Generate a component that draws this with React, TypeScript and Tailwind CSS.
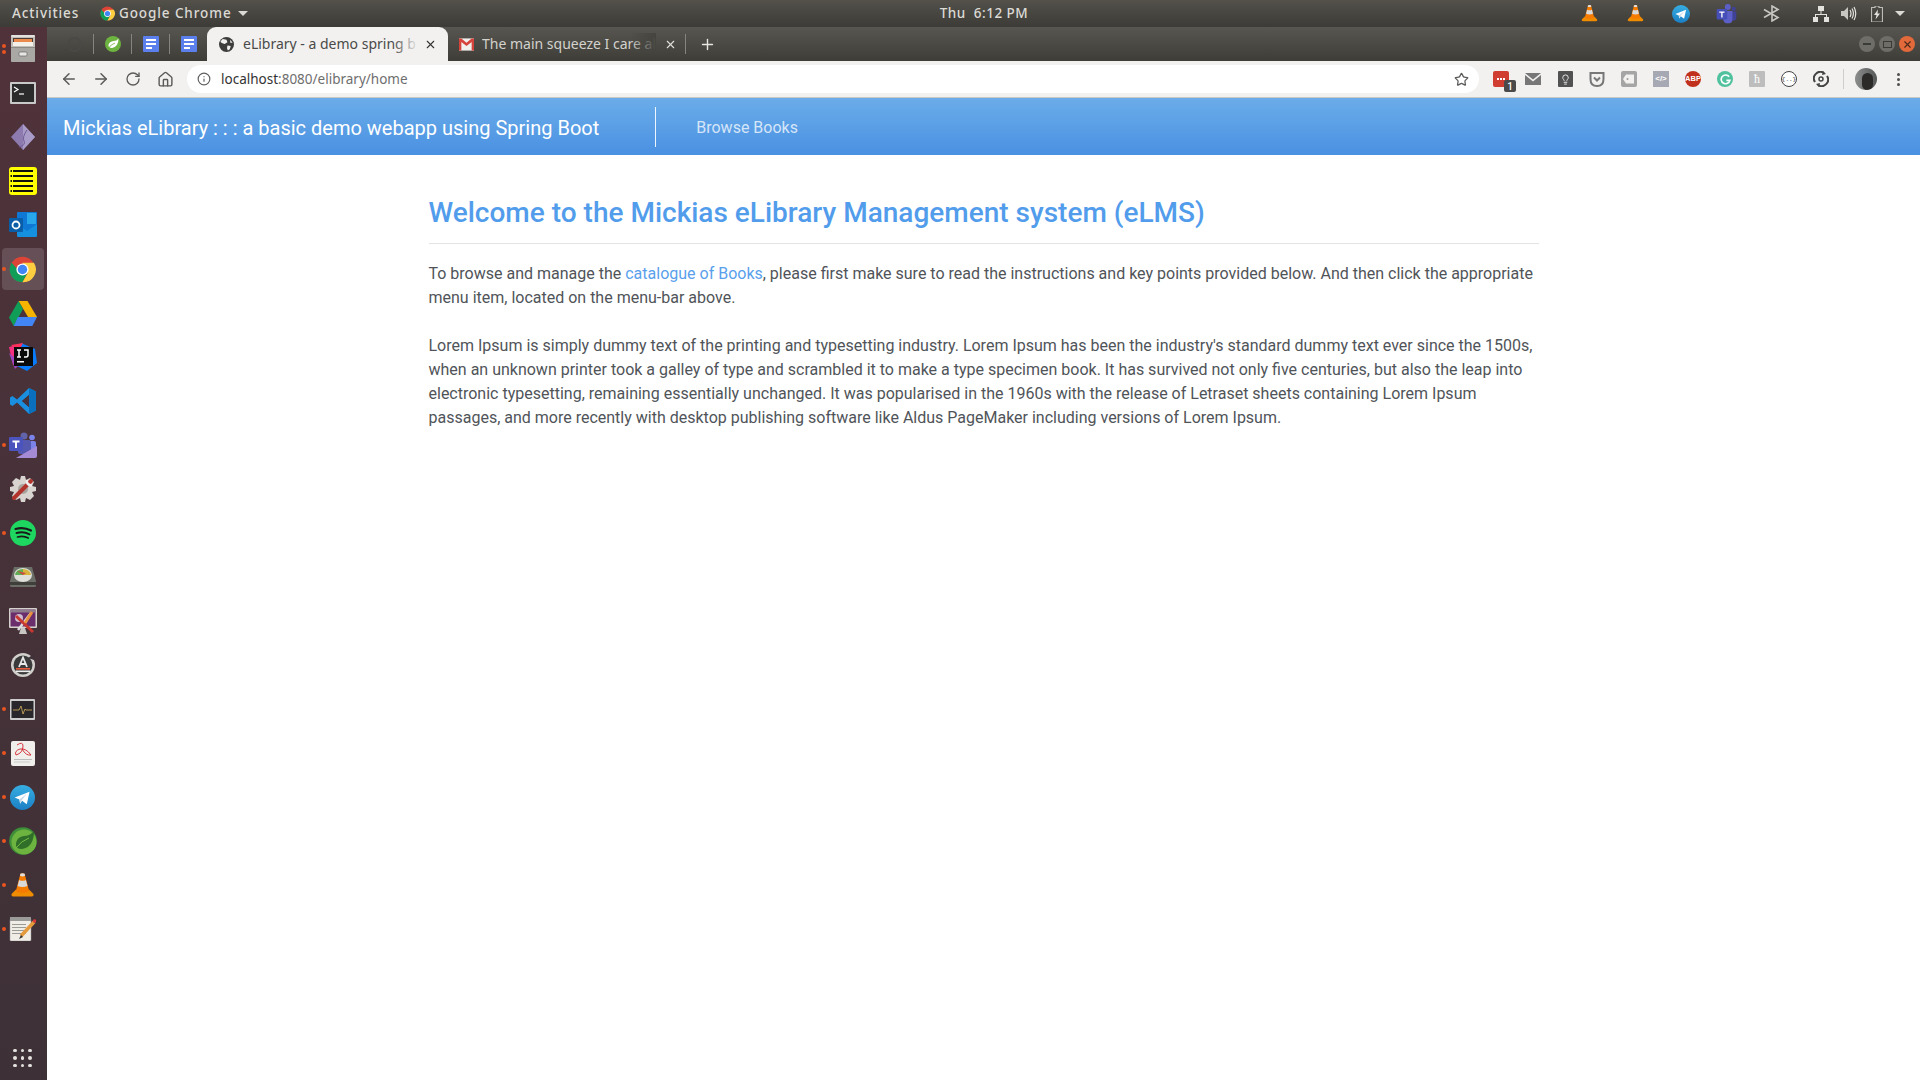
import React from "react";
import { ArrowLeft, ArrowRight, RotateCw, Home, Star, Info, X, Plus, Lightbulb } from "lucide-react";

type IP = { s?: number };
const Chrome = ({ s = 28 }: IP) => (
  <svg width={s} height={s} viewBox="0 0 32 32">
    <circle cx="16" cy="16" r="15" fill="#db4437" />
    <path d="M3.2 8 A15 15 0 0 0 16 31 L23 18 L12 18Z" fill="#0f9d58" />
    <path d="M16 8 H29.500 A15 15 0 0 1 16 31 L22.500 19.700Z" fill="#ffcd40" />
    <circle cx="16" cy="16" r="7.200" fill="#fff" />
    <circle cx="16" cy="16" r="5.600" fill="#4285f4" />
  </svg>
);
const Vlc = ({ s = 28 }: IP) => (
  <svg width={s} height={s} viewBox="0 0 32 32">
    <path d="M3 26 L8 21 H24 L29 26 Q29.500 29 27 29 H5 Q2.500 29 3 26Z" fill="#f08c00" />
    <path d="M13.500 2 Q16 1 18.500 2 L24 23 Q16 27 8 23Z" fill="#f57c00" />
    <path d="M12 9.500 Q16 11.500 20 9.500 L21.800 16.500 Q16 19 10.200 16.500Z" fill="#d9d9d9" />
    <path d="M13.500 2 Q16 1 18.500 2 L19 4.500 Q16 6 13 4.500Z" fill="#e0e0e0" />
  </svg>
);
const Telegram = ({ s = 28 }: IP) => (
  <svg width={s} height={s} viewBox="0 0 32 32">
    <defs><linearGradient id="tg" x1="0" y1="0" x2="0" y2="1"><stop offset="0" stopColor="#37aee2" /><stop offset="1" stopColor="#1b7fc4" /></linearGradient></defs>
    <circle cx="16" cy="16" r="16" fill="url(#tg)" />
    <path d="M6 16 L25 8.500 L21.500 24.500 L15.500 20 L13 24 L12 18.500Z" fill="#fff" />
    <path d="M12 18.500 L22 11 L15 19.500 L13 24Z" fill="#c8daea" />
  </svg>
);
const Teams = ({ s = 28 }: IP) => (
  <svg width={s} height={s} viewBox="0 0 32 32">
    <circle cx="18" cy="6" r="4.500" fill="#5b5fc7" />
    <circle cx="27" cy="9" r="3.200" fill="#3f4296" />
    <path d="M21 13 H31 V22 Q31 27 26 27 Q22 27 21 24Z" fill="#3f4296" />
    <path d="M11 12 H25 V25 Q25 31 18 31 Q12 31 11 25Z" fill="#5b5fc7" />
    <rect x="1" y="9" width="16" height="16" rx="1.500" fill="#464eb8" />
    <path d="M5 13 H13 V15 H10 V22 H8 V15 H5Z" fill="#fff" />
  </svg>
);

const Cabinet = () => (
  <svg width="26" height="28" viewBox="0 0 26 28">
    <rect x="1" y="0" width="24" height="27" rx="2" fill="#c2bfba" />
    <rect x="1" y="0" width="24" height="2" rx="1" fill="#e4e2de" />
    <rect x="3" y="3" width="20" height="8" fill="#4c3a33" />
    <rect x="4" y="4" width="18" height="3" fill="#ea8a4c" />
    <rect x="3" y="7" width="20" height="4" fill="#f3efe9" />
    <rect x="1" y="12" width="24" height="1" fill="#8d8a86" />
    <rect x="1" y="13" width="24" height="14" rx="1" fill="#aaa8a5" />
    <rect x="9" y="17" width="8" height="4" rx="1" fill="#e8e6e3" stroke="#666" strokeWidth="0.700" />
  </svg>
);
const Terminal = () => (
  <svg width="26" height="22" viewBox="0 0 26 22">
    <rect width="26" height="22" rx="1" fill="#c9c9c9" />
    <rect x="2" y="2" width="22" height="18" fill="#2b2b2b" />
    <path d="M4 5 L8 7.500 L4 10" fill="none" stroke="#fff" strokeWidth="1.200" />
    <path d="M9 12 H14" stroke="#fff" strokeWidth="1.200" />
  </svg>
);
const Diamond = () => (
  <svg width="26" height="28" viewBox="0 0 26 28">
    <path d="M13 1 L25 14 L13 27 L1 14Z" fill="#8d7bb0" />
    <path d="M13 1 L25 14 L13 27Z" fill="#a99bc8" />
    <path d="M17 7 Q12 14 14 18 T9 24" stroke="#6f5b93" strokeWidth="1" fill="none" />
  </svg>
);
const Notes = () => (
  <svg width="28" height="28" viewBox="0 0 28 28">
    <rect width="28" height="28" rx="3" fill="#ffff00" />
    {[3, 8, 13, 18, 23].map((y) => <rect key={y} x="4" y={y} width="20" height="2" fill="#111" />)}
    {[3, 8, 13, 18, 23].map((y) => <rect key={y} x="1.500" y={y} width="1.500" height="2" fill="#111" />)}
  </svg>
);
const Outlook = () => (
  <svg width="28" height="26" viewBox="0 0 28 26">
    <rect x="8" y="0" width="20" height="24" rx="1" fill="#0f78d4" />
    <rect x="18" y="1" width="9" height="11" fill="#28a8ea" />
    <path d="M8 12 L18 19 L28 12 V24 Q28 25 27 25 H9 Q8 25 8 24Z" fill="#1490df" />
    <rect x="0" y="6" width="14" height="14" rx="1" fill="#0a5ea8" />
    <circle cx="7" cy="13" r="3.500" fill="none" stroke="#fff" strokeWidth="1.800" />
  </svg>
);
const Drive = () => (
  <svg width="28" height="25" viewBox="0 0 28 25">
    <path d="M9.500 0 H18.500 L28 16 H19Z" fill="#f4b400" />
    <path d="M9.500 0 L0 16.500 L4.700 25 L14 8Z" fill="#0f9d58" />
    <path d="M9 16 H28 L23.300 25 H4.700Z" fill="#4285f4" />
  </svg>
);
const Intellij = () => (
  <svg width="28" height="28" viewBox="0 0 28 28">
    <path d="M0 4 L12 1 L10 22 L4 22Z" fill="#f5317f" />
    <path d="M12 0 L26 6 L28 20 L18 28 L6 22Z" fill="#087cfa" />
    <path d="M0 10 L6 26 L12 20Z" fill="#9d44c0" />
    <path d="M2 2 L14 0 L10 8Z" fill="#fe315d" />
    <rect x="5" y="4" width="19" height="19" fill="#0a0a0a" />
    <path d="M8 7 H12 M10 7 V14 M8 14 H12 M15 7 H19 V12 Q19 14 17 14 H15" stroke="#fff" strokeWidth="1.500" fill="none" />
    <rect x="8" y="18" width="7" height="1.500" fill="#fff" />
  </svg>
);
const VsCode = () => (
  <svg width="26" height="26" viewBox="0 0 26 26">
    <path d="M19 0 L26 3.500 V22.500 L19 26 L7 14.500 L2.500 18 L0 16.500 V9.500 L2.500 8 L7 11.500Z M19 7 L12 13 L19 19Z" fillRule="evenodd" fill="#1a8fdf" />
    <path d="M19 0 L26 3.500 V22.500 L19 26Z" fill="#0a6fbd" />
    <path d="M19 7 L19 19 L12 13Z" fill="#45323a" />
  </svg>
);
const TeamsDock = () => (
  <svg width="28" height="26" viewBox="0 0 28 26">
    <circle cx="15" cy="4" r="3.500" fill="#6264a7" />
    <circle cx="23" cy="5.500" r="2.800" fill="#7b83eb" />
    <rect x="18" y="9" width="9" height="11" rx="2" fill="#7b83eb" />
    <rect x="9" y="8" width="13" height="14" rx="2" fill="#5558af" />
    <rect x="0" y="5" width="14" height="14" rx="1" fill="#4b53bc" />
    <path d="M3.500 8.500 H10.500 V10.500 H8 V16 H6 V10.500 H3.500Z" fill="#fff" />
    <path d="M7 26 L28 14 V24 Q28 26 26 26Z" fill="#a58ad6" />
  </svg>
);
const Gear = () => (
  <svg width="26" height="26" viewBox="0 0 26 26">
    <path d="M11 0 H15 L16 4 L20 2 L24 6 L22 10 L26 11 V15 L22 16 L24 20 L20 24 L16 22 L15 26 H11 L10 22 L6 24 L2 20 L4 16 L0 15 V11 L4 10 L2 6 L6 2 L10 4Z" fill="#d8d4cf" />
    <circle cx="13" cy="13" r="5" fill="#a8a39d" />
    <path d="M21 5 L4 22" stroke="#b3342d" strokeWidth="4" strokeLinecap="round" />
    <path d="M17 4 a4 4 0 0 0 5 5" fill="none" stroke="#eee" strokeWidth="2.500" />
  </svg>
);
const Spotify = () => (
  <svg width="26" height="26" viewBox="0 0 26 26">
    <circle cx="13" cy="13" r="13" fill="#1ed760" />
    <path d="M5.500 9 Q13.500 6.500 21 10.500" stroke="#1a1a1a" strokeWidth="2.200" fill="none" strokeLinecap="round" />
    <path d="M6.500 13 Q13.500 11 19.500 14.300" stroke="#1a1a1a" strokeWidth="1.900" fill="none" strokeLinecap="round" />
    <path d="M7.500 17 Q13.500 15.300 18.300 18" stroke="#1a1a1a" strokeWidth="1.600" fill="none" strokeLinecap="round" />
  </svg>
);
const Disk = () => (
  <svg width="26" height="20" viewBox="0 0 26 20">
    <path d="M4 0 H22 L26 14 V19 Q26 20 24 20 H2 Q0 20 0 19 V14Z" fill="#6c6e68" />
    <ellipse cx="13" cy="8" rx="9" ry="7" fill="#dfe0da" />
    <path d="M5 8 A8 6 0 0 1 13 2 L13 8Z" fill="#5fae54" />
    <path d="M13 2 A8 6 0 0 1 21 8 L13 8Z" fill="#d8b33e" />
    <path d="M13 8 L7 4 L16 6Z" fill="#c94d3f" />
    <rect x="0" y="15" width="26" height="3" fill="#3e3f3b" />
  </svg>
);
const Tools = () => (
  <svg width="28" height="26" viewBox="0 0 28 26">
    <rect width="28" height="20" rx="1" fill="#d5d2ce" />
    <rect x="1.500" y="1.500" width="25" height="17" fill="#6b2e6d" />
    <rect x="1.500" y="1.500" width="25" height="3" fill="#8b7d8c" />
    <circle cx="10" cy="10" r="4" fill="#cdbacb" />
    <path d="M10 26 H18 L16 20 H12Z" fill="#c9c7c3" />
    <path d="M22 5 L9 22" stroke="#ddd" strokeWidth="2.500" />
    <path d="M7 8 L24 24" stroke="#c9352f" strokeWidth="3" />
    <path d="M23 4 L16 15" stroke="#e8923e" strokeWidth="3" />
  </svg>
);
const Updater = () => (
  <svg width="26" height="26" viewBox="0 0 26 26">
    <circle cx="13" cy="13" r="12" fill="#d0cfcc" />
    <circle cx="13" cy="13" r="9.500" fill="#3a3a3a" />
    <path d="M9 15 L13 5.500 L17 15 M10.300 12 H15.700" stroke="#e8e8e8" strokeWidth="1.800" fill="none" />
    <rect x="6" y="16" width="14" height="1.600" fill="#e65b3a" />
    <rect x="6" y="18.500" width="14" height="1.600" fill="#eee" />
    <path d="M24 2 L24 8 L18 6Z" fill="#403239" />
  </svg>
);
const Monitor = () => (
  <svg width="25" height="21" viewBox="0 0 25 21">
    <rect width="25" height="21" rx="1" fill="#cdcdcd" />
    <rect x="1.500" y="2" width="22" height="17" fill="#28262b" />
    <path d="M3 11 H9 L11 7 L13 15 L15 10 L16 11 H22" stroke="#d6b15c" strokeWidth="0.800" fill="none" />
  </svg>
);
const Evince = () => (
  <svg width="24" height="25" viewBox="0 0 24 25">
    <rect width="24" height="25" rx="2" fill="#f1efec" />
    <path d="M6 4 Q12 0 12 5 Q12 12 5 14 Q3 10 9 8 Q15 7 20 14 Q15 15 11 8" stroke="#d2222d" strokeWidth="0.900" fill="none" />
    <rect x="3" y="18" width="18" height="1" fill="#bbb" />
    <rect x="3" y="20.500" width="16" height="1" fill="#ccc" />
  </svg>
);
const SpringGear = () => (
  <svg width="28" height="28" viewBox="0 0 28 28">
    <circle cx="14" cy="14" r="13.800" fill="#3f8f3a" strokeDasharray="2 2" stroke="#2d6f2b" strokeWidth="0.400" />
    <circle cx="15" cy="15" r="12.500" fill="#6db33f" />
    <path d="M25 4 Q25 20 13 22 Q6 22 7 16 Q8 10 15 9 Q21 9 25 4Z" fill="#2f6f2a" />
    <path d="M7 21 Q12 14 20 11" stroke="#77bb44" strokeWidth="1" fill="none" />
  </svg>
);
const Editor = () => (
  <svg width="27" height="24" viewBox="0 0 27 24">
    <rect x="1" y="2" width="21" height="22" rx="1" fill="#f0ede6" stroke="#999" strokeWidth="0.500" />
    <rect x="1" y="0" width="21" height="4" fill="#9a9a98" />
    {[7, 10, 13, 16].map((y) => <rect key={y} x="3" y={y} width="14" height="1" fill="#9b9b96" />)}
    <path d="M25 5 L12 19" stroke="#e59b3c" strokeWidth="3.500" />
    <path d="M10 22 L12 18 L14 20Z" fill="#333" />
    <circle cx="25.500" cy="4" r="1.800" fill="#d73a3a" />
  </svg>
);

const Spring = () => (
  <svg width="16" height="16" viewBox="0 0 16 16">
    <circle cx="8" cy="8" r="8" fill="#6db33f" />
    <path d="M13.500 2.500 Q13.500 11 7 12 Q3 12 3.500 8.500 Q4.500 5.500 8.500 5 Q12 5 13.500 2.500Z" fill="#fff" />
    <path d="M3 13 Q6 8 10 7" stroke="#6db33f" strokeWidth="0.800" fill="none" />
  </svg>
);
const Docs = () => (
  <div className="flex h-4 w-4 flex-col items-start justify-center gap-[2px] rounded-[1px] bg-[#5c7fee] pl-[3px]">
    <span className="h-[2px] w-[10px] bg-white" />
    <span className="h-[2px] w-[10px] bg-white" />
    <span className="h-[2px] w-[6px] bg-white" />
  </div>
);
const Globe = ({ c = "#3d3d3b" }: { c?: string }) => (
  <svg width="15" height="15" viewBox="0 0 16 16" className="shrink-0">
    <circle cx="8" cy="8" r="8" fill={c} />
    <path d="M4 2 L8 3 L9 5.500 L6 7.500 L3 6.500 L1.500 5 Q2.500 3 4 2Z M9 9 L12.500 9.500 L11.500 13 L9.500 14.500 L8.500 12Z M12 3 L14.500 6 L12 6Z" fill="#f2f1f0" />
  </svg>
);
const Gmail = () => (
  <svg width="15" height="13" viewBox="0 0 16 13" className="shrink-0">
    <rect width="16" height="13" fill="#f1efec" />
    <path d="M0 0 H2.500 L8 4.500 L13.500 0 H16 V13 H13.500 V3.800 L8 8 L2.500 3.800 V13 H0Z" fill="#d6433a" />
  </svg>
);

function Dock({ dots = 0, active, children }: { dots?: number; active?: boolean; children: React.ReactNode }) {
  return (
    <div className="relative flex h-[44px] w-[47px] items-center justify-center pr-[2px]">
      {active && <div className="absolute left-[2px] top-[1px] h-[42px] w-[42px] rounded bg-white/15" />}
      {dots > 0 && (
        <div className="absolute left-[2px] top-0 flex h-full flex-col justify-center gap-[2px]">
          {Array.from({ length: dots }).map((_, i) => <span key={i} className="h-1 w-1 rounded-full bg-[#e95420]" />)}
        </div>
      )}
      <div className="relative flex items-center justify-center">{children}</div>
    </div>
  );
}

const Sep = () => <span className="block h-5 w-px bg-[#85847e]" />;

export default function App() {
  return (
    <div className="flex h-[1080px] w-[1920px] flex-col overflow-hidden bg-white font-['Roboto',sans-serif]">
      <header className="flex h-[27px] shrink-0 items-center bg-gradient-to-b from-[#53514a] to-[#3c3b37] font-['Noto_Sans',sans-serif] text-[13.500px] font-medium tracking-[0.900px] text-[#dcdad5]">
        <div className="flex w-[934px] items-center">
          <span className="ml-3 w-[88px]">Activities</span>
          <span className="mr-1 flex"><Chrome s={15} /></span>
          <span>Google Chrome</span>
          <span className="ml-[6px] h-0 w-0 border-x-[5px] border-t-[5px] border-x-transparent border-t-[#dcdad5]" />
        </div>
        <span className="w-[100px] whitespace-nowrap text-center tracking-[0.500px]">Thu&nbsp; 6:12 PM</span>
        <div className="flex items-center">
          <div className="ml-[523px] flex w-[64px] justify-center"><Vlc s={19} /></div>
          <div className="-ml-[18px] flex w-[64px] justify-center"><Vlc s={19} /></div>
          <div className="-ml-[18px] flex w-[64px] justify-center"><Telegram s={18} /></div>
          <div className="-ml-[19px] flex w-[64px] justify-center"><Teams s={21} /></div>
          <div className="-ml-[18px] flex w-[64px] justify-center">
            <svg width="18" height="17" viewBox="0 0 18 17" fill="none" stroke="#c8c6c1" strokeWidth="1.600"><path d="M1 4.500 L15 12.500 L9 16 V1 L15 4.500 L1 12.500" /></svg>
          </div>
          <div className="-ml-[15px] flex w-[64px] justify-center">
            <svg width="16" height="16" viewBox="0 0 16 16" fill="#e4e2de"><rect x="5" y="0" width="6" height="5" /><rect x="0" y="11" width="5" height="5" /><rect x="11" y="11" width="5" height="5" /><path d="M7.500 5 h1 V8 H14 V11 H13 V9 H3 V11 H2 V8 H7.500Z" /></svg>
          </div>
          <div className="-ml-[36px] flex w-[64px] justify-center">
            <svg width="16" height="15" viewBox="0 0 16 15"><path d="M0 5 H3 L7 1 V14 L3 10 H0Z" fill="#c8c6c1" /><path d="M9 4 Q11 7.500 9 11 M11 2.500 Q13.800 7.500 11 12.500 M13 1 Q16.500 7.500 13 14" fill="none" stroke="#e4e2de" strokeWidth="1.200" /></svg>
          </div>
          <div className="-ml-[36px] flex w-[64px] justify-center">
            <svg width="12" height="16" viewBox="0 0 12 16"><path d="M4 0 H8 V1.500 H11.500 V16 H0.500 V1.500 H4Z" fill="none" stroke="#bdbbb6" strokeWidth="1.200" /><path d="M7 3.500 L3 9 H5.500 L4.500 13.500 L9 7.500 H6.500Z" fill="#e4e2de" /></svg>
          </div>
          <span className="-ml-[14px] h-0 w-0 border-x-[5px] border-t-[5px] border-x-transparent border-t-[#dcdad5]" />
        </div>
      </header>

      <div className="flex min-h-0 flex-1">
        <aside className="flex w-[47px] shrink-0 flex-col bg-gradient-to-b from-[#50323a] to-[#3d3137]">
          <Dock dots={2}><Cabinet /></Dock>
          <Dock><Terminal /></Dock>
          <Dock><Diamond /></Dock>
          <Dock><Notes /></Dock>
          <Dock><Outlook /></Dock>
          <Dock dots={1} active><Chrome s={27} /></Dock>
          <Dock><Drive /></Dock>
          <Dock><Intellij /></Dock>
          <Dock><VsCode /></Dock>
          <Dock dots={1}><TeamsDock /></Dock>
          <Dock><Gear /></Dock>
          <Dock dots={1}><Spotify /></Dock>
          <Dock><Disk /></Dock>
          <Dock><Tools /></Dock>
          <Dock><Updater /></Dock>
          <Dock dots={1}><Monitor /></Dock>
          <Dock dots={1}><Evince /></Dock>
          <Dock dots={1}><Telegram s={25} /></Dock>
          <Dock dots={1}><SpringGear /></Dock>
          <Dock dots={1}><Vlc s={27} /></Dock>
          <Dock dots={1}><Editor /></Dock>
          <div className="mb-[13px] mt-auto grid w-[45px] grid-cols-[repeat(3,3.500px)] justify-center gap-[4px]">
            {Array.from({ length: 9 }).map((_, i) => <span key={i} className="h-[3.500px] w-[3.500px] rounded-full bg-[#e4e2de]" />)}
          </div>
        </aside>

        <main className="flex min-w-0 flex-1 flex-col">
          <div className="flex h-[34px] shrink-0 items-end bg-gradient-to-b from-[#575650] to-[#3e3d38] font-['Noto_Sans',sans-serif] text-[14px]">
            <div className="flex h-[34px] w-[160px] items-center">
              <div className="flex w-[46px] justify-center pl-[8px]"><span className="h-[15px] w-[15px] rounded-full border-2 border-[#4a4945]" /></div>
              <Sep />
              <div className="flex w-[37px] justify-center"><Spring /></div>
              <Sep />
              <div className="flex w-[37px] justify-center"><Docs /></div>
              <Sep />
              <div className="flex w-[37px] justify-center"><Docs /></div>
            </div>
            <div className="relative flex h-[34px] w-[241px] items-center rounded-t-[9px] bg-[#f2f1f0] pl-[12px] text-[#4a4a48]">
              <Globe />
              <span className="ml-[9px] w-[174px] shrink-0 overflow-hidden whitespace-nowrap pb-[2px]">eLibrary - a demo spring b</span>
              <span className="absolute left-[186px] top-[6px] h-5 w-[26px] bg-gradient-to-r from-transparent to-[#f2f1f0]" />
              <X size={13} color="#333" strokeWidth={2} className="ml-[7px] shrink-0" />
            </div>
            <div className="relative flex h-[34px] w-[237px] items-center pl-[11px] text-[#d3d2cd]">
              <Gmail />
              <span className="ml-[8px] w-[173px] shrink-0 overflow-hidden whitespace-nowrap pb-[2px]">The main squeeze I care al</span>
              <span className="absolute left-[182px] top-[6px] h-5 w-[26px] bg-gradient-to-r from-transparent to-[#45443f]" />
              <X size={13} color="#e4e2de" strokeWidth={2} className="ml-[9px] shrink-0" />
              <span className="ml-[8px]"><Sep /></span>
            </div>
            <div className="flex h-[34px] items-center">
              <Plus size={17} color="#e8e6e1" strokeWidth={2} className="ml-[14px]" />
            </div>
            <div className="ml-auto mr-[5px] flex h-[34px] items-center gap-1">
              <span className="flex h-4 w-4 items-center justify-center rounded-full bg-[#6e6d68]"><span className="h-[1.500px] w-2 bg-[#3a3a36]" /></span>
              <span className="flex h-4 w-4 items-center justify-center rounded-full bg-[#6e6d68]"><span className="h-[7px] w-[9px] border border-[#3a3a36]" /></span>
              <span className="flex h-4 w-4 items-center justify-center rounded-full bg-[#e2693a]"><X size={11} color="#4a2a1c" strokeWidth={2.500} /></span>
            </div>
          </div>

          <div className="flex h-[37px] shrink-0 items-center border-b border-[#c9c8c6] bg-[#f2f1f0]">
            <div className="flex w-[140px] items-center text-[#5a5a58]">
              <span className="flex w-[32px] justify-center pl-[12px]"><ArrowLeft size={18} strokeWidth={2} /></span>
              <span className="flex w-[32px] justify-center pl-[12px]"><ArrowRight size={18} strokeWidth={2} /></span>
              <span className="flex w-[32px] justify-center pl-[12px]"><RotateCw size={16} strokeWidth={2} /></span>
              <span className="flex w-[32px] justify-center pl-[12px]"><Home size={17} strokeWidth={2} /></span>
            </div>
            <div className="flex h-[28px] w-[1292px] items-center rounded-full bg-white pl-[10px] pr-[10px] font-['Noto_Sans',sans-serif] text-[13.500px]">
              <Info size={14} color="#5f5f5f" strokeWidth={2} />
              <span className="ml-[10px] text-[#333]">localhost</span>
              <span className="text-[#6e6e6e]">:8080/elibrary/home</span>
              <Star size={15} color="#5a5a58" strokeWidth={2} className="ml-auto" />
            </div>
            <div className="ml-[6px] flex items-center">
              <div className="relative flex w-[32px] justify-center">
                <span className="flex h-4 w-4 items-center justify-center gap-[1px] rounded-[2px] bg-[#cf3e30]">
                  <span className="h-[2px] w-[2px] bg-white" /><span className="h-[2px] w-[2px] bg-white" /><span className="h-[2px] w-[2px] bg-white" />
                </span>
                <span className="absolute left-[19px] top-[9px] flex h-[12px] w-[12px] items-center justify-center rounded-[2px] bg-[#4a4a4a] text-[10px] font-medium text-white">1</span>
              </div>
              <div className="flex w-[32px] justify-center">
                <svg width="16" height="12" viewBox="0 0 16 12"><path d="M0 0 H16 L8 6.500Z M0 2 L8 8.500 L16 2 V12 H0Z" fill="#777" /></svg>
              </div>
              <div className="flex w-[32px] justify-center">
                <span className="flex h-[16px] w-[15px] items-center justify-center rounded-[1px] bg-[#525252]"><Lightbulb size={11} color="#f2f1f0" strokeWidth={2} /></span>
              </div>
              <div className="flex w-[32px] justify-center">
                <svg width="16" height="15" viewBox="0 0 16 15"><path d="M1.500 1 H14.500 V7 Q14.500 14 8 14 Q1.500 14 1.500 7Z" fill="none" stroke="#777" strokeWidth="2" /><path d="M5 5.500 L8 8.500 L11 5.500" fill="none" stroke="#777" strokeWidth="2" /></svg>
              </div>
              <div className="flex w-[32px] justify-center">
                <svg width="16" height="16" viewBox="0 0 16 16"><rect width="16" height="16" rx="2" fill="#a5a5a5" /><path d="M5 3.500 H13 V12.500 H5 L2 8Z" fill="#f2f1f0" /><circle cx="6.500" cy="8" r="1" fill="#999" /></svg>
              </div>
              <div className="flex w-[32px] justify-center">
                <span className="flex h-4 w-4 items-center justify-center overflow-hidden whitespace-nowrap bg-[#a6a8b3] font-['Liberation_Sans',sans-serif] text-[8px] font-bold text-white">&lt;/&gt;</span>
              </div>
              <div className="flex w-[32px] justify-center">
                <span className="flex h-4 w-4 items-center justify-center overflow-hidden rounded-full bg-[#c0301c] font-['Liberation_Sans',sans-serif] text-[7.500px] font-bold text-white">ABP</span>
              </div>
              <div className="flex w-[32px] justify-center">
                <span className="flex h-4 w-4 items-center justify-center rounded-full bg-[#4fc19c]">
                  <svg width="11" height="11" viewBox="0 0 12 12"><path d="M10 3 A4.800 4.800 0 1 0 10.800 7 H7" fill="none" stroke="#fff" strokeWidth="1.800" /></svg>
                </span>
              </div>
              <div className="flex w-[32px] justify-center">
                <span className="flex h-4 w-4 items-center justify-center rounded-[1px] bg-[#bdbdbd] font-['Liberation_Serif',serif] text-[12px] text-white">ћ</span>
              </div>
              <div className="flex w-[32px] justify-center">
                <span className="flex h-4 w-4 items-center justify-center overflow-hidden whitespace-nowrap rounded-full border border-[#444] bg-white font-['Liberation_Mono',monospace] text-[6px] text-[#333]">{"{..}"}</span>
              </div>
              <div className="flex w-[32px] justify-center">
                <svg width="16" height="16" viewBox="0 0 16 16" fill="none" stroke="#444" strokeWidth="2"><path d="M2 11 A6.500 6.500 0 0 1 11 2" /><path d="M14 5 A6.500 6.500 0 0 1 5 14" /><circle cx="8" cy="8" r="2" strokeWidth="1.500" /><path d="M10 0 L13 3 L9 4Z M6 16 L3 13 L7 12Z" fill="#444" stroke="none" /></svg>
              </div>
              <span className="ml-[6px] h-5 w-px bg-[#cfcecb]" />
              <span className="ml-[11px] flex h-[22px] w-[22px] items-center justify-center overflow-hidden rounded-full bg-gradient-to-r from-[#8b8e8c] to-[#555857]">
                <span className="h-[17px] w-[11px] translate-x-[1px] translate-y-[2px] rounded-full bg-[#2b2a29]" />
              </span>
              <div className="ml-[20px] flex flex-col gap-[2px]">
                <span className="h-[3px] w-[3px] rounded-full bg-[#4f4f4f]" />
                <span className="h-[3px] w-[3px] rounded-full bg-[#4f4f4f]" />
                <span className="h-[3px] w-[3px] rounded-full bg-[#4f4f4f]" />
              </div>
            </div>
          </div>

          <nav className="flex h-[57px] shrink-0 items-center bg-gradient-to-b from-[#6bade9] to-[#4a90e2]">
            <a className="ml-4 pt-[2px] text-[20px] leading-[30px] text-white">Mickias eLibrary : : : a basic demo webapp using Spring Boot</a>
            <span className="ml-[56px] h-10 w-px bg-white/90" />
            <a className="ml-[40px] pt-[2px] text-base text-white/75">Browse Books</a>
          </nav>

          <section className="mx-auto w-[1110px] pt-[37px] text-base leading-6 text-[#505459]">
            <h1 className="border-b border-[#e3e3e3] pb-[9px] text-[28px] font-medium leading-[42px] text-[#529cec]">
              Welcome to the Mickias eLibrary Management system (eLMS)
            </h1>
            <p className="mt-[18px]">
              To browse and manage the <a className="text-[#5a9fec]">catalogue of Books</a>, please first make sure to read the instructions and key points provided below. And then click the appropriate menu item, located on the menu-bar above.
            </p>
            <p className="mt-[24px]">
              Lorem Ipsum is simply dummy text of the printing and typesetting industry. Lorem Ipsum has been the industry's standard dummy text ever since the 1500s, when an unknown printer took a galley of type and scrambled it to make a type specimen book. It has survived not only five centuries, but also the leap into electronic typesetting, remaining essentially unchanged. It was popularised in the 1960s with the release of Letraset sheets containing Lorem Ipsum passages, and more recently with desktop publishing software like Aldus PageMaker including versions of Lorem Ipsum.
            </p>
          </section>
        </main>
      </div>
    </div>
  );
}
